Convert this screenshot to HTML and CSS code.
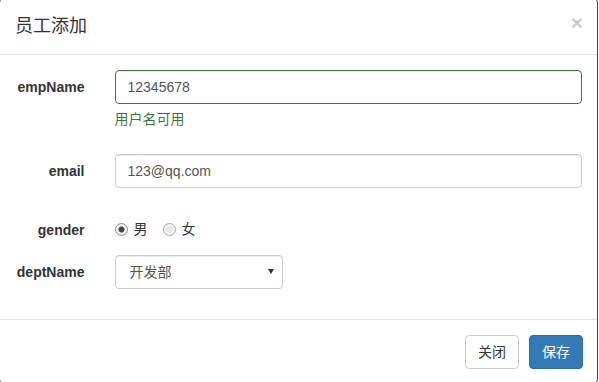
FILE: index.html
```html
<!DOCTYPE html>
<html lang="zh-CN">
<head>
<meta charset="utf-8">
<title>员工添加</title>
<link rel="stylesheet" href="styles.css">
</head>
<body>
<div class="modal-content">
  <div class="modal-header">
    <h4 class="modal-title">员工添加</h4>
    <button type="button" class="close">×</button>
  </div>
  <div class="modal-body">
    <form class="form-horizontal">
      <div class="form-group has-success">
        <label class="control-label col-2">empName</label>
        <div class="col-10">
          <input type="text" class="form-control" value="12345678">
          <span class="help-block">用户名可用</span>
        </div>
      </div>
      <div class="form-group">
        <label class="control-label col-2">email</label>
        <div class="col-10">
          <input type="text" class="form-control" value="123@qq.com">
          <span class="help-block empty"></span>
        </div>
      </div>
      <div class="form-group">
        <label class="control-label col-2">gender</label>
        <div class="col-10 radios">
          <label class="radio-inline"><input type="radio" name="gender" checked> 男</label>
          <label class="radio-inline"><input type="radio" name="gender"> 女</label>
        </div>
      </div>
      <div class="form-group">
        <label class="control-label col-2">deptName</label>
        <div class="col-4">
          <div class="select-wrap">
            <select class="form-control select"><option>开发部</option></select>
            <span class="arrow"></span>
          </div>
        </div>
      </div>
    </form>
  </div>
  <div class="modal-footer">
    <button type="button" class="btn btn-default">关闭</button>
    <button type="button" class="btn btn-primary">保存</button>
  </div>
</div>
</body>
</html>
```

FILE: styles.css
```css
* { box-sizing: border-box; }
html, body {
  margin: 0;
  padding: 0;
  width: 599px;
  height: 382px;
  overflow: hidden;
  background: #fff;
}
body {
  font-family: "Liberation Sans", "Noto Sans CJK SC", sans-serif;
  font-size: 14px;
  line-height: 20px;
  color: #333;
}
.modal-content {
  margin: -3px 0 0 -1px;
  width: 599px;
  border: 1px solid #444;
  border-radius: 6px;
  background: #fff;
}
.modal-header {
  display: flex;
  justify-content: space-between;
  align-items: flex-start;
  padding: 15px;
  border-bottom: 1px solid #e5e5e5;
}
.modal-title {
  margin: 0;
  font-size: 18px;
  font-weight: normal;
  line-height: 26px;
  color: #333;
}
.close {
  padding: 0;
  margin-top: -1px;
  margin-right: -1px;
  border: 0;
  background: transparent;
  font-family: "Liberation Sans", sans-serif;
  font-size: 21px;
  font-weight: bold;
  line-height: 1;
  color: #000;
  opacity: .2;
  text-shadow: 0 1px 0 #fff;
}
.modal-body {
  padding: 15px;
}
.form-horizontal { margin: 0; }
.form-group {
  display: flex;
  align-items: flex-start;
  margin: 0 -15px 15px;
}
.col-2, .col-4, .col-10 {
  padding: 0 15px;
}
.col-2 { width: 16.6667%; }
.col-4 { width: 33.3333%; }
.col-10 { width: 83.3333%; }
.control-label {
  padding-top: 7px;
  text-align: right;
  font-weight: bold;
  margin: 0;
  line-height: 20px;
}
.form-control {
  display: block;
  width: 100%;
  height: 34px;
  padding: 6px 12px;
  font-family: "Liberation Sans", "Noto Sans CJK SC", sans-serif;
  font-size: 14px;
  line-height: 20px;
  color: #555;
  background: #fff;
  border: 1px solid #ccc;
  border-radius: 4px;
  box-shadow: inset 0 1px 1px rgba(0,0,0,.075);
  outline: none;
}
.has-success .form-control {
  border-color: #3c763d;
}
.has-success .help-block { color: #3c763d; }
.help-block {
  display: block;
  margin: 5px 0 10px;
  color: #737373;
}
.help-block.empty { margin: 10px 0 0; }
.radios {
  display: flex;
  align-items: center;
  height: 26px;
  padding-top: 6px;
}
.radio-inline {
  display: flex;
  align-items: center;
  height: 20px;
  line-height: 20px;
  color: #333;
}
.radio-inline + .radio-inline { margin-left: 15px; }
.radio-inline input {
  appearance: none;
  -webkit-appearance: none;
  width: 13px;
  height: 13px;
  margin: 0 6px 0 0;
  border: 1px solid #a9a9a9;
  border-radius: 50%;
  background: radial-gradient(circle, #e6e6e6 0 3px, #f4f4f4 4px);
}
.radio-inline input:checked {
  background: radial-gradient(circle, #444 0 2.5px, #f0f0f0 3.5px);
  border-color: #8f8f8f;
}
.select-wrap { position: relative; }
.select {
  appearance: none;
  -webkit-appearance: none;
  padding-left: 14px;
}
.arrow {
  position: absolute;
  right: 9px;
  top: 14px;
  width: 0;
  height: 0;
  border-left: 3px solid transparent;
  border-right: 3px solid transparent;
  border-top: 5px solid #333;
}
.modal-footer {
  display: flex;
  justify-content: flex-end;
  gap: 10px;
  padding: 15px 14px 15px 15px;
  border-top: 1px solid #e5e5e5;
}
.btn {
  height: 34px;
  padding: 6px 12px;
  font-family: "Liberation Sans", "Noto Sans CJK SC", sans-serif;
  font-size: 14px;
  line-height: 20px;
  border: 1px solid transparent;
  border-radius: 4px;
}
.btn-default {
  color: #333;
  background: #fff;
  border-color: #ccc;
}
.btn-primary {
  color: #fff;
  background: #337ab7;
  border-color: #2e6da4;
}
```
